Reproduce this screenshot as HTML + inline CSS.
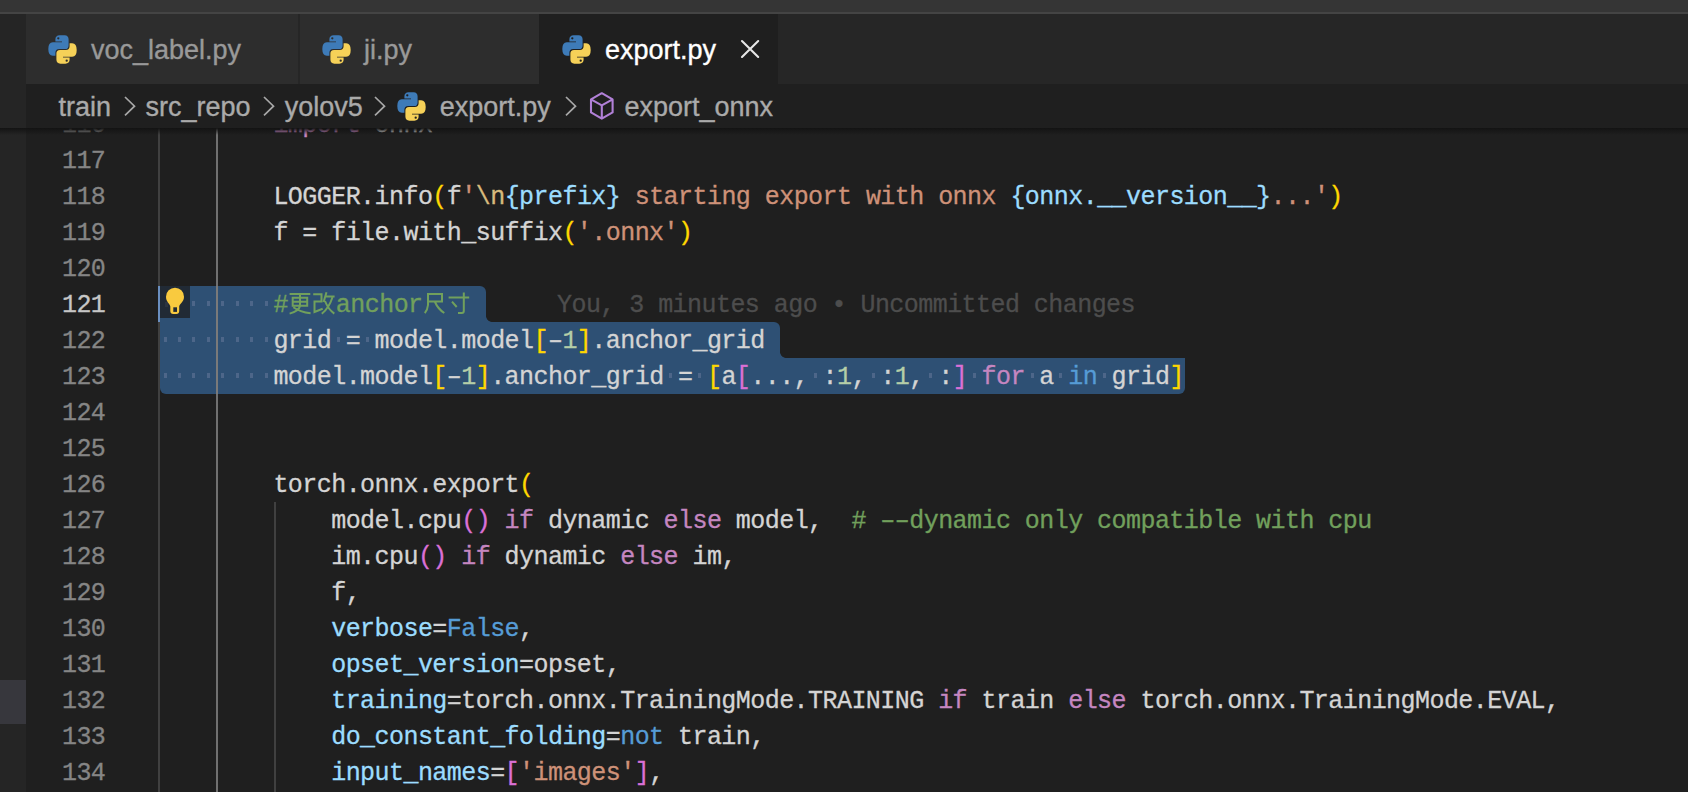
<!DOCTYPE html>
<html><head><meta charset="utf-8"><style>
*{margin:0;padding:0;box-sizing:border-box}
html,body{width:1688px;height:792px;overflow:hidden;background:#1f1f1f}
.a{position:absolute}
.code{position:absolute;-webkit-text-stroke:0.3px currentColor;white-space:pre;font-family:"Liberation Mono",monospace;font-size:25px;letter-spacing:-0.552px;line-height:36px;height:36px}
.ln{position:absolute;-webkit-text-stroke:0.3px currentColor;left:0;width:105.3px;text-align:right;white-space:pre;font-family:"Liberation Mono",monospace;font-size:25px;letter-spacing:-0.552px;line-height:36px;color:#858585}
.ui{position:absolute;-webkit-text-stroke:0.35px currentColor;white-space:pre;font-family:"Liberation Sans",sans-serif;font-size:27px;line-height:30px}
</style></head><body>

<div class="a" style="left:0;top:0;width:1688px;height:12px;background:#353535"></div>
<div class="a" style="left:0;top:12px;width:1688px;height:2px;background:#444444"></div>
<div class="a" style="left:0;top:14px;width:1688px;height:70px;background:#262626"></div>
<div class="a" style="left:26px;top:14px;width:272px;height:70px;background:#2d2d2d"></div>
<div class="a" style="left:300px;top:14px;width:239px;height:70px;background:#2d2d2d"></div>
<div class="a" style="left:539px;top:14px;width:239px;height:70px;background:#1f1f1f"></div>
<div class="a" style="left:0;top:14px;width:26px;height:778px;background:#252525"></div>
<div class="a" style="left:0;top:680px;width:26px;height:44px;background:#37373d"></div>
<div class="a" style="left:0;top:128px;width:1688px;height:664px;overflow:hidden">
<div class="a" style="left:0;top:-128px;width:1688px;height:792px">
<div class="a" style="left:158px;top:105px;width:2px;height:700px;background:#404040"></div>
<div class="a" style="left:216px;top:105px;width:2px;height:700px;background:#707070"></div>
<div class="a" style="left:274px;top:502px;width:2px;height:400px;background:#404040"></div>
<div class="a" style="left:160px;top:286px;width:325.8px;height:36px;background:#2e5074;border-radius:0 6px 0 0"></div>
<div class="a" style="left:160px;top:322px;width:620px;height:36px;background:#2e5074;border-radius:0 6px 0 0"></div>
<div class="a" style="left:160px;top:358px;width:1024.5px;height:36px;background:#2e5074;border-radius:0 0 6px 6px"></div>
<div class="a" style="left:485.8px;top:316px;width:6px;height:6px;background:radial-gradient(circle at 100% 0,rgba(0,0,0,0) 5.5px,#2e5074 6.2px)"></div>
<div class="a" style="left:780px;top:352px;width:6px;height:6px;background:radial-gradient(circle at 100% 0,rgba(0,0,0,0) 5.5px,#2e5074 6.2px)"></div>
<div class="a" style="left:216px;top:286px;width:2px;height:108px;background:#7a7a7a"></div>
<div class="a" style="left:158px;top:286px;width:2px;height:36px;background:#6a8fc0"></div>
<div class="a" style="left:177.9px;top:301px;width:3px;height:4.5px;background:#4d6689"></div>
<div class="a" style="left:192.4px;top:301px;width:3px;height:4.5px;background:#4d6689"></div>
<div class="a" style="left:206.8px;top:301px;width:3px;height:4.5px;background:#4d6689"></div>
<div class="a" style="left:221.3px;top:301px;width:3px;height:4.5px;background:#4d6689"></div>
<div class="a" style="left:235.8px;top:301px;width:3px;height:4.5px;background:#4d6689"></div>
<div class="a" style="left:250.2px;top:301px;width:3px;height:4.5px;background:#4d6689"></div>
<div class="a" style="left:264.6px;top:301px;width:3px;height:4.5px;background:#4d6689"></div>
<div class="a" style="left:163.5px;top:337px;width:3px;height:4.5px;background:#4d6689"></div>
<div class="a" style="left:177.9px;top:337px;width:3px;height:4.5px;background:#4d6689"></div>
<div class="a" style="left:192.4px;top:337px;width:3px;height:4.5px;background:#4d6689"></div>
<div class="a" style="left:206.8px;top:337px;width:3px;height:4.5px;background:#4d6689"></div>
<div class="a" style="left:221.3px;top:337px;width:3px;height:4.5px;background:#4d6689"></div>
<div class="a" style="left:235.8px;top:337px;width:3px;height:4.5px;background:#4d6689"></div>
<div class="a" style="left:250.2px;top:337px;width:3px;height:4.5px;background:#4d6689"></div>
<div class="a" style="left:264.6px;top:337px;width:3px;height:4.5px;background:#4d6689"></div>
<div class="a" style="left:336.9px;top:337px;width:3px;height:4.5px;background:#4d6689"></div>
<div class="a" style="left:365.8px;top:337px;width:3px;height:4.5px;background:#4d6689"></div>
<div class="a" style="left:163.5px;top:373px;width:3px;height:4.5px;background:#4d6689"></div>
<div class="a" style="left:177.9px;top:373px;width:3px;height:4.5px;background:#4d6689"></div>
<div class="a" style="left:192.4px;top:373px;width:3px;height:4.5px;background:#4d6689"></div>
<div class="a" style="left:206.8px;top:373px;width:3px;height:4.5px;background:#4d6689"></div>
<div class="a" style="left:221.3px;top:373px;width:3px;height:4.5px;background:#4d6689"></div>
<div class="a" style="left:235.8px;top:373px;width:3px;height:4.5px;background:#4d6689"></div>
<div class="a" style="left:250.2px;top:373px;width:3px;height:4.5px;background:#4d6689"></div>
<div class="a" style="left:264.6px;top:373px;width:3px;height:4.5px;background:#4d6689"></div>
<div class="a" style="left:669.2px;top:373px;width:3px;height:4.5px;background:#4d6689"></div>
<div class="a" style="left:698.2px;top:373px;width:3px;height:4.5px;background:#4d6689"></div>
<div class="a" style="left:813.8px;top:373px;width:3px;height:4.5px;background:#4d6689"></div>
<div class="a" style="left:871.5px;top:373px;width:3px;height:4.5px;background:#4d6689"></div>
<div class="a" style="left:929.3px;top:373px;width:3px;height:4.5px;background:#4d6689"></div>
<div class="a" style="left:972.7px;top:373px;width:3px;height:4.5px;background:#4d6689"></div>
<div class="a" style="left:1030.5px;top:373px;width:3px;height:4.5px;background:#4d6689"></div>
<div class="a" style="left:1059.4px;top:373px;width:3px;height:4.5px;background:#4d6689"></div>
<div class="a" style="left:1102.8px;top:373px;width:3px;height:4.5px;background:#4d6689"></div>
<div class="a" style="left:160px;top:286px;width:30px;height:32px;background:#212a35"></div>
<div class="a" style="left:165px;top:302px;width:3px;height:4.5px;background:#2c3440"></div>
<svg class="a" style="left:160px;top:286px" width="30" height="32" viewBox="160 286 30 32"><path d="M170.3 311 V306.5 C170.3 304 166 302.2 166 296.7 A9 9 0 0 1 184 296.7 C184 302.2 179.2 304 179.2 306.5 V311 Q179.2 314 176.2 314 H173.3 Q170.3 314 170.3 311 Z" fill="#f9ca3f"/><rect x="173.3" y="307.3" width="3.7" height="4.6" fill="#212a35"/></svg>
<svg class="a" style="left:286px;top:288px" width="190" height="30" viewBox="286 288 190 30"><g fill="none" stroke="#71a05c" stroke-width="2" stroke-linecap="butt" stroke-linejoin="miter"><path d="M289.6 294 H310.3 M292.7 297.7 H307.2 V305.8 H292.7 Z M292.7 301.7 H307.2 M300 294 V306 Q299 311 289.6 313.6 M293.3 307.2 Q300 312 310.6 313.3"/><path d="M313.2 294.2 H321.5 V301.5 H314.5 V312 L322.7 308.8 M326.5 292.3 L323.6 302 M326 296.4 H334.6 M332.4 297.5 Q329 308 321.8 313.8 M325 301 Q328 309 334.3 313.6"/><path d="M427.9 294 H442 V301.4 H427.9 M428 293 V305 Q427.5 310 424.8 313.2 M435 302 Q438 309 444.3 313"/><path d="M448.6 297.5 H469.2 M463.8 292.6 V311 Q463.8 313 461.8 313 H458 M452 301.7 L456.7 307"/></g></svg>
<div class="ln" style="top:108px;color:#858585">116</div>
<div class="code" style="left:273.40px;top:108px"><span style="color:#c586c0">import</span><span style="color:#d4d4d4"> onnx</span></div>
<div class="ln" style="top:144px;color:#858585">117</div>
<div class="ln" style="top:180px;color:#858585">118</div>
<div class="code" style="left:273.40px;top:180px"><span style="color:#d4d4d4">LOGGER.info</span><span style="color:#ffd700">(</span><span style="color:#d4d4d4">f</span><span style="color:#ce9178">&#x27;</span><span style="color:#d7ba7d">\n</span><span style="color:#9cdcfe">{</span><span style="color:#9cdcfe">prefix</span><span style="color:#9cdcfe">}</span><span style="color:#ce9178"> starting export with onnx </span><span style="color:#9cdcfe">{</span><span style="color:#9cdcfe">onnx</span><span style="color:#9cdcfe">.</span><span style="color:#9cdcfe">__version__</span><span style="color:#9cdcfe">}</span><span style="color:#ce9178">...&#x27;</span><span style="color:#ffd700">)</span></div>
<div class="ln" style="top:216px;color:#858585">119</div>
<div class="code" style="left:273.40px;top:216px"><span style="color:#d4d4d4">f = file.with_suffix</span><span style="color:#ffd700">(</span><span style="color:#ce9178">&#x27;.onnx&#x27;</span><span style="color:#ffd700">)</span></div>
<div class="ln" style="top:252px;color:#858585">120</div>
<div class="ln" style="top:288px;color:#c6c6c6">121</div>
<div class="ln" style="top:324px;color:#858585">122</div>
<div class="code" style="left:273.40px;top:324px"><span style="color:#d4d4d4">grid = model.model</span><span style="color:#ffd700">[</span><span style="color:#d4d4d4">–</span><span style="color:#b5cea8">1</span><span style="color:#ffd700">]</span><span style="color:#d4d4d4">.anchor_grid</span></div>
<div class="ln" style="top:360px;color:#858585">123</div>
<div class="code" style="left:273.40px;top:360px"><span style="color:#d4d4d4">model.model</span><span style="color:#ffd700">[</span><span style="color:#d4d4d4">–</span><span style="color:#b5cea8">1</span><span style="color:#ffd700">]</span><span style="color:#d4d4d4">.anchor_grid = </span><span style="color:#ffd700">[</span><span style="color:#d4d4d4">a</span><span style="color:#da70d6">[</span><span style="color:#d4d4d4">..., :</span><span style="color:#b5cea8">1</span><span style="color:#d4d4d4">, :</span><span style="color:#b5cea8">1</span><span style="color:#d4d4d4">, :</span><span style="color:#da70d6">]</span><span style="color:#d4d4d4"> </span><span style="color:#c586c0">for</span><span style="color:#d4d4d4"> a </span><span style="color:#569cd6">in</span><span style="color:#d4d4d4"> grid</span><span style="color:#ffd700">]</span></div>
<div class="ln" style="top:396px;color:#858585">124</div>
<div class="ln" style="top:432px;color:#858585">125</div>
<div class="ln" style="top:468px;color:#858585">126</div>
<div class="code" style="left:273.40px;top:468px"><span style="color:#d4d4d4">torch.onnx.export</span><span style="color:#ffd700">(</span></div>
<div class="ln" style="top:504px;color:#858585">127</div>
<div class="code" style="left:331.20px;top:504px"><span style="color:#d4d4d4">model.cpu</span><span style="color:#da70d6">()</span><span style="color:#d4d4d4"> </span><span style="color:#c586c0">if</span><span style="color:#d4d4d4"> dynamic </span><span style="color:#c586c0">else</span><span style="color:#d4d4d4"> model,  </span><span style="color:#71a05c"># ––dynamic only compatible with cpu</span></div>
<div class="ln" style="top:540px;color:#858585">128</div>
<div class="code" style="left:331.20px;top:540px"><span style="color:#d4d4d4">im.cpu</span><span style="color:#da70d6">()</span><span style="color:#d4d4d4"> </span><span style="color:#c586c0">if</span><span style="color:#d4d4d4"> dynamic </span><span style="color:#c586c0">else</span><span style="color:#d4d4d4"> im,</span></div>
<div class="ln" style="top:576px;color:#858585">129</div>
<div class="code" style="left:331.20px;top:576px"><span style="color:#d4d4d4">f,</span></div>
<div class="ln" style="top:612px;color:#858585">130</div>
<div class="code" style="left:331.20px;top:612px"><span style="color:#9cdcfe">verbose</span><span style="color:#d4d4d4">=</span><span style="color:#569cd6">False</span><span style="color:#d4d4d4">,</span></div>
<div class="ln" style="top:648px;color:#858585">131</div>
<div class="code" style="left:331.20px;top:648px"><span style="color:#9cdcfe">opset_version</span><span style="color:#d4d4d4">=opset,</span></div>
<div class="ln" style="top:684px;color:#858585">132</div>
<div class="code" style="left:331.20px;top:684px"><span style="color:#9cdcfe">training</span><span style="color:#d4d4d4">=torch.onnx.TrainingMode.TRAINING </span><span style="color:#c586c0">if</span><span style="color:#d4d4d4"> train </span><span style="color:#c586c0">else</span><span style="color:#d4d4d4"> torch.onnx.TrainingMode.EVAL,</span></div>
<div class="ln" style="top:720px;color:#858585">133</div>
<div class="code" style="left:331.20px;top:720px"><span style="color:#9cdcfe">do_constant_folding</span><span style="color:#d4d4d4">=</span><span style="color:#569cd6">not</span><span style="color:#d4d4d4"> train,</span></div>
<div class="ln" style="top:756px;color:#858585">134</div>
<div class="code" style="left:331.20px;top:756px"><span style="color:#9cdcfe">input_names</span><span style="color:#d4d4d4">=</span><span style="color:#da70d6">[</span><span style="color:#ce9178">&#x27;images&#x27;</span><span style="color:#da70d6">]</span><span style="color:#d4d4d4">,</span></div>
<div class="code" style="left:273.40px;top:288px;color:#71a05c">#</div>
<div class="code" style="left:335.85px;top:288px;color:#71a05c">anchor</div>
<div class="code" style="left:557px;top:288px;color:#4d4d4d">You, 3 minutes ago • Uncommitted changes</div>
</div>
<div class="a" style="left:0;top:0;width:1688px;height:7px;background:linear-gradient(#131313,rgba(19,19,19,0))"></div>
</div>
<div class="a" style="left:26px;top:84px;width:1662px;height:44px;background:#1f1f1f"></div>
<svg class="a" style="left:48px;top:34.5px" width="29" height="29" viewBox="0 0 29 29"><path fill="#3e7bb8" d="M7.4 4.2 Q7.4 0.6 11.6 0.3 L16.6 0.3 Q20.6 0.5 20.6 4.4 L20.6 10.4 Q20.6 14 17 14 L11.2 14 Q7.4 14.1 7.4 17.8 L7.4 20.8 L4.8 20.8 Q0.3 20.6 0.3 14 Q0.3 7.3 4.8 7.2 L14 7.2 L14 6.4 L7.4 6.4 Z"/><circle cx="10.3" cy="3.3" r="1.15" fill="#2d2d2d"/><g transform="rotate(180 14.5 14.5)"><path fill="#f6d158" d="M7.4 4.2 Q7.4 0.6 11.6 0.3 L16.6 0.3 Q20.6 0.5 20.6 4.4 L20.6 10.4 Q20.6 14 17 14 L11.2 14 Q7.4 14.1 7.4 17.8 L7.4 20.8 L4.8 20.8 Q0.3 20.6 0.3 14 Q0.3 7.3 4.8 7.2 L14 7.2 L14 6.4 L7.4 6.4 Z"/><circle cx="10.3" cy="3.3" r="1.15" fill="#2d2d2d"/></g></svg>
<svg class="a" style="left:321.5px;top:34.5px" width="29" height="29" viewBox="0 0 29 29"><path fill="#3e7bb8" d="M7.4 4.2 Q7.4 0.6 11.6 0.3 L16.6 0.3 Q20.6 0.5 20.6 4.4 L20.6 10.4 Q20.6 14 17 14 L11.2 14 Q7.4 14.1 7.4 17.8 L7.4 20.8 L4.8 20.8 Q0.3 20.6 0.3 14 Q0.3 7.3 4.8 7.2 L14 7.2 L14 6.4 L7.4 6.4 Z"/><circle cx="10.3" cy="3.3" r="1.15" fill="#2d2d2d"/><g transform="rotate(180 14.5 14.5)"><path fill="#f6d158" d="M7.4 4.2 Q7.4 0.6 11.6 0.3 L16.6 0.3 Q20.6 0.5 20.6 4.4 L20.6 10.4 Q20.6 14 17 14 L11.2 14 Q7.4 14.1 7.4 17.8 L7.4 20.8 L4.8 20.8 Q0.3 20.6 0.3 14 Q0.3 7.3 4.8 7.2 L14 7.2 L14 6.4 L7.4 6.4 Z"/><circle cx="10.3" cy="3.3" r="1.15" fill="#2d2d2d"/></g></svg>
<svg class="a" style="left:562px;top:34.5px" width="29" height="29" viewBox="0 0 29 29"><path fill="#3e7bb8" d="M7.4 4.2 Q7.4 0.6 11.6 0.3 L16.6 0.3 Q20.6 0.5 20.6 4.4 L20.6 10.4 Q20.6 14 17 14 L11.2 14 Q7.4 14.1 7.4 17.8 L7.4 20.8 L4.8 20.8 Q0.3 20.6 0.3 14 Q0.3 7.3 4.8 7.2 L14 7.2 L14 6.4 L7.4 6.4 Z"/><circle cx="10.3" cy="3.3" r="1.15" fill="#1f1f1f"/><g transform="rotate(180 14.5 14.5)"><path fill="#f6d158" d="M7.4 4.2 Q7.4 0.6 11.6 0.3 L16.6 0.3 Q20.6 0.5 20.6 4.4 L20.6 10.4 Q20.6 14 17 14 L11.2 14 Q7.4 14.1 7.4 17.8 L7.4 20.8 L4.8 20.8 Q0.3 20.6 0.3 14 Q0.3 7.3 4.8 7.2 L14 7.2 L14 6.4 L7.4 6.4 Z"/><circle cx="10.3" cy="3.3" r="1.15" fill="#1f1f1f"/></g></svg>
<svg class="a" style="left:397px;top:91.5px" width="29" height="29" viewBox="0 0 29 29"><path fill="#3e7bb8" d="M7.4 4.2 Q7.4 0.6 11.6 0.3 L16.6 0.3 Q20.6 0.5 20.6 4.4 L20.6 10.4 Q20.6 14 17 14 L11.2 14 Q7.4 14.1 7.4 17.8 L7.4 20.8 L4.8 20.8 Q0.3 20.6 0.3 14 Q0.3 7.3 4.8 7.2 L14 7.2 L14 6.4 L7.4 6.4 Z"/><circle cx="10.3" cy="3.3" r="1.15" fill="#1f1f1f"/><g transform="rotate(180 14.5 14.5)"><path fill="#f6d158" d="M7.4 4.2 Q7.4 0.6 11.6 0.3 L16.6 0.3 Q20.6 0.5 20.6 4.4 L20.6 10.4 Q20.6 14 17 14 L11.2 14 Q7.4 14.1 7.4 17.8 L7.4 20.8 L4.8 20.8 Q0.3 20.6 0.3 14 Q0.3 7.3 4.8 7.2 L14 7.2 L14 6.4 L7.4 6.4 Z"/><circle cx="10.3" cy="3.3" r="1.15" fill="#1f1f1f"/></g></svg>
<svg class="a" style="left:738px;top:37px" width="24" height="24" viewBox="738 37 24 24"><path d="M742 41 L758.2 57 M758.2 41 L742 57" stroke="#e6e6e6" stroke-width="2.1" stroke-linecap="round"/></svg>
<svg class="a" style="left:122px;top:94px" width="16" height="24" viewBox="0 0 16 24"><path d="M3 3 L12.5 12.2 L3 21.4" fill="none" stroke="#a8a8a8" stroke-width="1.7"/></svg>
<svg class="a" style="left:261px;top:94px" width="16" height="24" viewBox="0 0 16 24"><path d="M3 3 L12.5 12.2 L3 21.4" fill="none" stroke="#a8a8a8" stroke-width="1.7"/></svg>
<svg class="a" style="left:372.3px;top:94px" width="16" height="24" viewBox="0 0 16 24"><path d="M3 3 L12.5 12.2 L3 21.4" fill="none" stroke="#a8a8a8" stroke-width="1.7"/></svg>
<svg class="a" style="left:562.8px;top:94px" width="16" height="24" viewBox="0 0 16 24"><path d="M3 3 L12.5 12.2 L3 21.4" fill="none" stroke="#a8a8a8" stroke-width="1.7"/></svg>
<svg class="a" style="left:586px;top:88px" width="32" height="36" viewBox="586 88 32 36"><path d="M601.8 93.2 L612.6 99.4 L612.6 112.4 L601.8 118.6 L591 112.4 L591 99.4 Z M591 99.4 L601.8 105.4 L612.6 99.4 M601.8 105.4 L601.8 118.6" fill="none" stroke="#b180d7" stroke-width="2.1" stroke-linejoin="round"/></svg>
<div class="ui" style="left:91px;top:35px;color:#999999">voc_label.py</div>
<div class="ui" style="left:364px;top:35px;color:#999999">ji.py</div>
<div class="ui" style="left:605px;top:35px;color:#ffffff">export.py</div>
<div class="ui" style="left:58.5px;top:92px;color:#aaaaaa">train</div>
<div class="ui" style="left:145.6px;top:92px;color:#aaaaaa">src_repo</div>
<div class="ui" style="left:284.8px;top:92px;color:#aaaaaa">yolov5</div>
<div class="ui" style="left:439.7px;top:92px;color:#aaaaaa">export.py</div>
<div class="ui" style="left:624.5px;top:92px;color:#aaaaaa">export_onnx</div>
</body></html>
